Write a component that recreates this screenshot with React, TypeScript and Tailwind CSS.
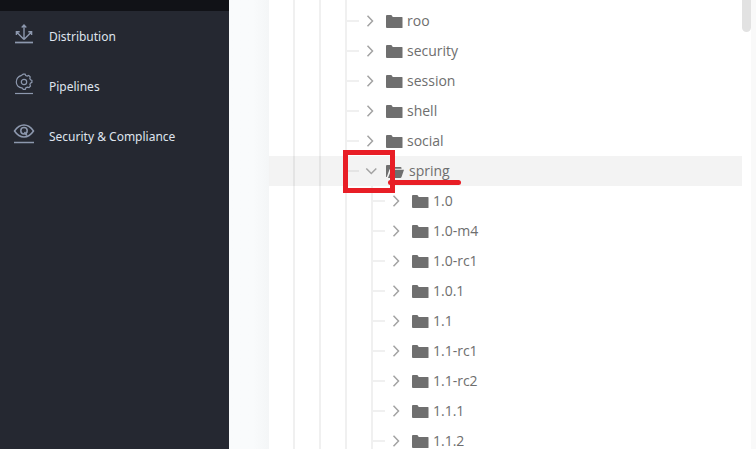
type IconProps = { className?: string };

function DistributionIcon({ className }: IconProps) {
  return (
    <svg viewBox="0 0 20 20" className={className} fill="none" stroke="currentColor" strokeWidth="1.4" aria-hidden="true">
      <path d="M10 15.5V1M7.7 3.4 10 1.100l2.300 2.300M10 15.500 2.600 8.100M10 15.500l7.400-7.400M2.400 11V7.800h3.300M17.600 11V7.800h-3.300" />
      <path d="M1 18.500h18" strokeWidth="1.7" />
    </svg>
  );
}

function PipelinesIcon({ className }: IconProps) {
  return (
    <svg viewBox="0 0 20 22" className={className} fill="none" stroke="currentColor" strokeWidth="1.2" aria-hidden="true">
      <path d="M9.200 1.200h1.900l.6 1.300 1.500.5 1.500-.6 1.500 1.500-.4 1.500.7 1.300 1.400.6v2.100l-1.500.7-.5 1.400.6 1.500-1.500 1.600-1.700-.5-1.400.7-.6 1.500H9.200l-.7-1.100Q2.300 14 2.300 9q0-5.200 5.300-6.700z" />
      <circle cx="10" cy="9" r="2.700" />
      <path d="M1 20.500h18" />
    </svg>
  );
}

function SecurityIcon({ className }: IconProps) {
  return (
    <svg viewBox="0 0 22 20" className={className} fill="none" stroke="currentColor" strokeWidth="1.5" aria-hidden="true">
      <path d="M1.500 7Q5.500 1 11 1t9.500 6q-4 6-9.500 6T1.500 7z" />
      <circle cx="11" cy="6.800" r="3.200" />
      <path d="m11.500 8 2.300 3.500" />
      <path d="M1 18.500h20" />
    </svg>
  );
}

function Chevron({ open }: { open?: boolean }) {
  return (
    <svg viewBox="0 0 12 12" className="size-3" fill="none" stroke="#a3a3a3" strokeWidth="1.5" aria-hidden="true">
      {open ? <path d="m1.300 3.500 5 5 5-5" /> : <path d="m2.500 .8 5 5.200-5 5.200" />}
    </svg>
  );
}

function Folder({ open }: { open?: boolean }) {
  return open ? (
    <svg viewBox="0 0 19 13" className="h-[13px] w-[19px]" fill="#6f6f6f" aria-hidden="true">
      <path d="M0 11.500V1q0-1 1-1h4.500L7 2h7.500q1 0 1 1v.8H4.800q-1 0-1.400 1L.8 12Q0 12 0 11.500z" />
      <path d="M5.300 4.800H18L15.500 12q-.3 1-1.300 1H2z" />
    </svg>
  ) : (
    <svg viewBox="0 0 17 13" className="h-[13px] w-[17px]" fill="#6f6f6f" aria-hidden="true">
      <path d="M0 12V1q0-1 1-1h4q.6 0 .9.600L6.700 2H16q.5 0 .5.500v10q0 .5-.5.500H1q-1 0-1-1z" />
    </svg>
  );
}

const navItems = [
  { label: "Distribution", Icon: DistributionIcon, size: "h-5 w-5" },
  { label: "Pipelines", Icon: PipelinesIcon, size: "h-[22px] w-5" },
  { label: "Security & Compliance", Icon: SecurityIcon, size: "h-5 w-[22px]" },
];

const folders = [
  { name: "roo", depth: 3 },
  { name: "security", depth: 3 },
  { name: "session", depth: 3 },
  { name: "shell", depth: 3 },
  { name: "social", depth: 3 },
  { name: "spring", depth: 3, open: true },
  { name: "1.0", depth: 4 },
  { name: "1.0-m4", depth: 4 },
  { name: "1.0-rc1", depth: 4 },
  { name: "1.0.1", depth: 4 },
  { name: "1.1", depth: 4 },
  { name: "1.1-rc1", depth: 4 },
  { name: "1.1-rc2", depth: 4 },
  { name: "1.1.1", depth: 4 },
  { name: "1.1.2", depth: 4 },
];

function Sidebar() {
  return (
    <nav className="w-[229px] shrink-0 border-t-[11px] border-[#111217] bg-[#252831]">
      <ul>
        {navItems.map(({ label, Icon, size }) => (
          <li key={label}>
            <a
              href="#"
              className="flex h-[50px] items-center gap-[13px] pt-0.5 pl-3 font-['Noto_Sans',sans-serif] text-xs text-[#dfe4ee]"
            >
              <span className="flex w-6 justify-center pb-1.5 text-[#8d98ae]">
                <Icon className={size} />
              </span>
              {label}
            </a>
          </li>
        ))}
      </ul>
    </nav>
  );
}

function Guides({ depth, branch }: { depth: number; branch?: boolean }) {
  return Array.from({ length: depth }, (_, i) => (
    <span key={i} className="flex w-[26px] items-center border-l-2 border-black/6">
      {branch && i === depth - 1 && <span className="h-0.5 w-3 bg-black/6" />}
    </span>
  ));
}

function TreeRow({ name, depth, open }: { name: string; depth: number; open?: boolean }) {
  return (
    <li className={`flex h-[30px] pl-6 ${open ? "bg-[#f3f3f3]" : ""}`}>
      <Guides depth={depth} branch />
      <button type="button" aria-expanded={!!open} className="relative flex items-center text-sm text-[#6e6e6e]">
        <span className="mr-[9px] -ml-1.5">
          <Chevron open={open} />
        </span>
        <Folder open={open} />
        <span className="ml-1">{name}</span>
        {open && (
          <>
            <span className="absolute -top-1.5 -left-7 h-[43px] w-[52px] border-5 border-[#e81e26]" />
            <span className="absolute top-6 left-[17px] h-[5px] w-[73px] rounded-full bg-[#e81e26]" />
          </>
        )}
      </button>
    </li>
  );
}

export default function App() {
  return (
    <div className="flex h-screen overflow-hidden bg-[#f9fbfc] font-['Open_Sans',sans-serif]">
      <Sidebar />
      <div className="w-10 shrink-0 bg-linear-to-r from-[#f9fbfc] from-60% to-[#f4f6f7]" />
      <main className="flex min-w-0 flex-1 bg-white">
        <div className="min-w-0 flex-1">
          <div className="flex h-1.5 pl-6">
            <Guides depth={3} />
          </div>
          <ul>
            {folders.map((folder) => (
              <TreeRow key={folder.name} {...folder} />
            ))}
          </ul>
        </div>
        <div className="w-[9px] shrink-0">
          <div className="h-8 rounded-b-full bg-[#e2e2e2]" />
        </div>
      </main>
      <div className="w-[5px] shrink-0 bg-[#f9f9f9]" />
    </div>
  );
}
